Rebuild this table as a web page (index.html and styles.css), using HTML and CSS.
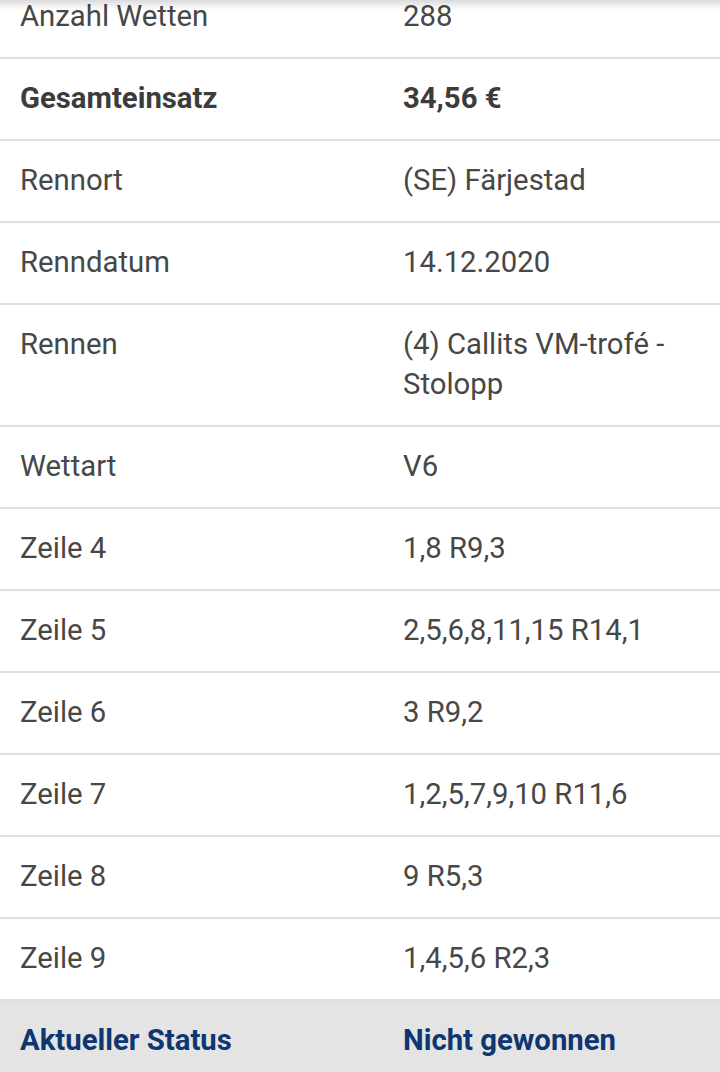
FILE: index.html
```html
<!DOCTYPE html>
<html lang="de">
<head>
<meta charset="utf-8">
<title>Wettschein</title>
<link rel="stylesheet" href="styles.css">
</head>
<body>
<div class="topshadow"></div>
<div class="details">
  <div class="row"><div class="label">Anzahl Wetten</div><div class="value">288</div></div>
  <div class="row bold"><div class="label">Gesamteinsatz</div><div class="value">34,56 €</div></div>
  <div class="row"><div class="label">Rennort</div><div class="value">(SE) Färjestad</div></div>
  <div class="row"><div class="label">Renndatum</div><div class="value">14.12.2020</div></div>
  <div class="row"><div class="label">Rennen</div><div class="value">(4) Callits VM-trofé - Stolopp</div></div>
  <div class="row"><div class="label">Wettart</div><div class="value">V6</div></div>
  <div class="row"><div class="label">Zeile 4</div><div class="value">1,8 R9,3</div></div>
  <div class="row"><div class="label">Zeile 5</div><div class="value">2,5,6,8,11,15 R14,1</div></div>
  <div class="row"><div class="label">Zeile 6</div><div class="value">3 R9,2</div></div>
  <div class="row"><div class="label">Zeile 7</div><div class="value">1,2,5,7,9,10 R11,6</div></div>
  <div class="row"><div class="label">Zeile 8</div><div class="value">9 R5,3</div></div>
  <div class="row"><div class="label">Zeile 9</div><div class="value">1,4,5,6 R2,3</div></div>
  <div class="row status"><div class="label">Aktueller Status</div><div class="value">Nicht gewonnen</div></div>
</div>
</body>
</html>
```
FILE: styles.css
```css
html, body {
  margin: 0;
  padding: 0;
  background: #ffffff;
  overflow: hidden;
}
body {
  font-family: Roboto, "Noto Sans", sans-serif;
  font-size: 29.3px;
  line-height: 40px;
  color: #474747;
}
.topshadow {
  position: fixed;
  top: 0;
  left: 0;
  right: 0;
  height: 10px;
  background: linear-gradient(to bottom, rgba(0,0,0,0.14), rgba(0,0,0,0));
  z-index: 2;
}
.details {
  margin-top: -23px;
}
.row {
  display: grid;
  grid-template-columns: 403px 1fr;
  padding: 19px 20px 21px 0;
  border-bottom: 2px solid #dedede;
}
.label {
  padding-left: 20px;
}
.bold {
  font-weight: 700;
  color: #3c3c3c;
}
.status {
  background: #e4e4e4;
  font-weight: 700;
  color: #0d3672;
  border-bottom: none;
  padding-bottom: 40px;
}
```
